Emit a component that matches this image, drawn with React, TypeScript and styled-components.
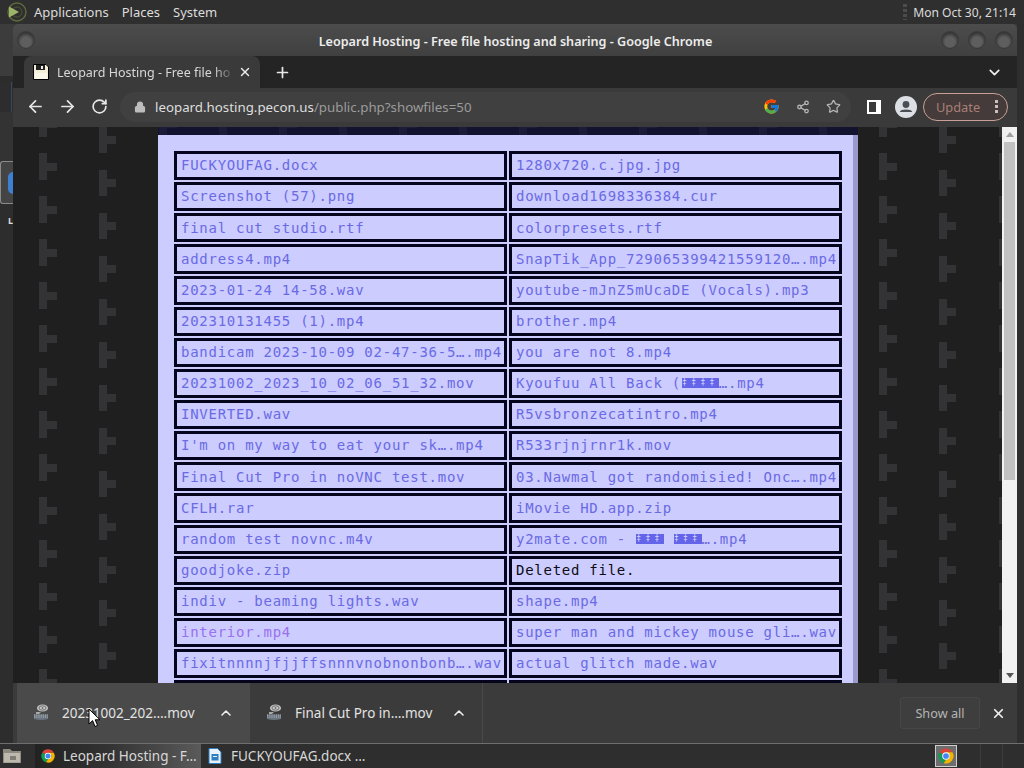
import React from 'react';
import styled, { createGlobalStyle } from 'styled-components';
import { FcGoogle } from 'react-icons/fc';
import { ArrowLeft, ArrowRight, RotateCw, Lock, Share2, Star, ChevronUp, ChevronDown, X, Plus } from 'lucide-react';

const GlobalStyle = createGlobalStyle`
  html, body {
    margin: 0;
    padding: 0;
    background: #2e2e2e;
  }
  * {
    box-sizing: border-box;
  }
`;

const Screen = styled.div`
  position: relative;
  width: 1024px;
  height: 768px;
  overflow: hidden;
  display: flex;
  flex-direction: column;
  font-family: "Noto Sans", "Open Sans", sans-serif;
  color: #e6e6e6;
`;

const TopPanel = styled.div`
  height: 24px;
  flex: none;
  display: flex;
  align-items: center;
  background: #2f2f2f;
  padding: 0 3px 0 6px;
  font-size: 13px;
`;

const PanelMenu = styled.span<{ $ml: number }>`
  margin-left: ${(p) => p.$ml}px;
  color: #dcdcdc;
`;

const PanelGrip = styled.span`
  margin-left: auto;
  width: 4px;
  height: 16px;
  margin-right: 6px;
  background: repeating-linear-gradient(#4c4c4c 0 3px, transparent 3px 5px);
`;

const PanelClock = styled.span`
  color: #dcdcdc;
  font-size: 12.1px;
  padding-right: 5px;
`;

const Middle = styled.div`
  flex: 1;
  min-height: 0;
  display: flex;
`;

const LeftSliver = styled.div`
  width: 13px;
  flex: none;
  display: flex;
  flex-direction: column;
`;

const SliverPart = styled.div<{ $h: number; $bg: string }>`
  height: ${(p) => p.$h}px;
  flex: none;
  background: ${(p) => p.$bg};
  overflow: hidden;
`;

const SliverCard = styled.div`
  height: 43px;
  flex: none;
  background: #444;
  border: 1px solid #8a8a8a;
  border-right: none;
  border-radius: 3px 0 0 3px;
  display: flex;
  align-items: center;
  justify-content: flex-end;
`;

const SliverBlue = styled.div`
  width: 5px;
  height: 22px;
  background: #3d7fd0;
  border-radius: 5px 0 0 5px;
`;

const SliverLetter = styled.div`
  height: 14px;
  flex: none;
  background: #2d2d2d;
  color: #ddd;
  font-size: 9px;
  font-weight: 700;
  padding-left: 8px;
`;

const RightSliver = styled.div`
  width: 7px;
  flex: none;
  background: #2e2e2e;
`;

const ChromeWindow = styled.div`
  width: 1004px;
  flex: none;
  display: flex;
  flex-direction: column;
  background: #3a3a3a;
`;

const TitleBar = styled.div`
  height: 32px;
  flex: none;
  display: flex;
  align-items: center;
  padding: 0 4px 0 4px;
  background: linear-gradient(#4c4c4c, #404040);
  border-radius: 5px 5px 0 0;
`;

const TitleText = styled.div`
  flex: 1;
  padding: 2px 0 0 55px;
  text-align: center;
  font-size: 12.6px;
  font-weight: 600;
  color: #ededed;
`;

const WinButton = styled.span<{ $gap?: number }>`
  width: 18px;
  height: 18px;
  flex: none;
  margin-left: ${(p) => p.$gap ?? 0}px;
  border-radius: 50%;
  background: radial-gradient(circle at 50% 62%, #5e5e5e 38%, #363636 72%);
  border: 1px solid #3a3a3a;
`;

const TabStrip = styled.div`
  height: 32px;
  flex: none;
  display: flex;
  align-items: center;
  background: #242425;
  padding-left: 11px;
  color: #e8e8e8;
`;

const Tab = styled.div`
  width: 236px;
  height: 32px;
  flex: none;
  display: flex;
  align-items: center;
  padding: 0 8px 0 9px;
  background: #3a3a3a;
  border-radius: 8px 8px 0 0;
  font-size: 12.5px;
  color: #d8d8d8;
`;

const TabTitle = styled.span`
  width: 178px;
  margin-left: 8px;
  flex: none;
  white-space: nowrap;
  -webkit-mask-image: linear-gradient(90deg, #000 88%, transparent);
  mask-image: linear-gradient(90deg, #000 88%, transparent);
`;

const TabClose = styled.span`
  display: flex;
  margin-left: 3px;
  color: #eee;
`;

const NewTab = styled.span`
  display: flex;
  margin-left: 14px;
`;

const StripChevron = styled.span`
  margin-left: auto;
  margin-right: 14px;
  display: flex;
  color: #eee;
`;

const Toolbar = styled.div`
  height: 39px;
  flex: none;
  display: flex;
  align-items: center;
  background: #3a3a3a;
  padding: 0 9px 2px 12px;
  color: #e6e6e6;
`;

const NavButton = styled.span`
  width: 20px;
  flex: none;
  display: flex;
  justify-content: center;
  margin-right: 12px;
`;

const Omnibox = styled.div`
  width: 731px;
  height: 30px;
  flex: none;
  margin-left: -1px;
  display: flex;
  align-items: center;
  padding: 0 10px 0 14px;
  border-radius: 15px;
  background: #404040;
  font-size: 13.3px;
  color: #9b9b9b;
`;

const UrlHost = styled.span`
  color: #dedede;
`;

const UrlLock = styled.span`
  display: flex;
  margin-right: 9px;
  color: #bdbdbd;
`;

const OmniIcons = styled.span`
  margin-left: auto;
  display: flex;
  align-items: center;
  gap: 16px;
  color: #b5b5b5;
`;

const SidePanelIcon = styled.span`
  width: 14px;
  height: 14px;
  flex: none;
  margin-left: 16px;
  border: 2px solid #fff;
  border-right-width: 5px;
  background: #3a3a3a;
`;

const Avatar = styled.span`
  width: 22px;
  height: 22px;
  flex: none;
  margin-left: 14px;
  display: flex;
`;

const UpdatePill = styled.div`
  width: 85px;
  height: 28px;
  flex: none;
  margin-left: 6px;
  display: flex;
  align-items: center;
  padding: 0 9px 0 12px;
  border: 1px solid #c9a096;
  border-radius: 14px;
  font-size: 12.8px;
  color: #a97f77;
  background: #443b3a;
`;

const PillDots = styled.span`
  margin-left: auto;
  width: 3px;
  height: 13px;
  background: repeating-linear-gradient(#c8c0be 0 3px, transparent 3px 5px);
`;

const Viewport = styled.div`
  flex: 1;
  min-height: 0;
  display: flex;
`;

const PageArea = styled.div`
  position: relative;
  flex: 1;
  min-width: 0;
  overflow: hidden;
  background: #1f1f20;
`;

const Wallpaper = styled.svg`
  position: absolute;
  inset: 0;
  width: 100%;
  height: 100%;
`;

const PanelWrap = styled.div`
  position: relative;
  width: 700px;
  margin-left: 145px;
`;

const PanelCap = styled.div`
  height: 8px;
  background: rgba(10, 10, 60, 0.55);
`;

const FilePanel = styled.div`
  background: #ccccff;
  border-right: 5px solid #9999cc;
  padding: 16px 11px 0 16px;
`;

const FileGrid = styled.div`
  display: grid;
  grid-template-columns: 333px 333px;
  grid-auto-rows: 29.125px;
  column-gap: 2px;
  row-gap: 2px;
`;

const FileCell = styled.div<{ $kind?: 'visited' | 'deleted' }>`
  border: 3px solid #04041c;
  padding: 0 0 0.4px 4px;
  display: flex;
  align-items: center;
  white-space: nowrap;
  overflow: hidden;
  font-family: "DejaVu Sans Mono", "Liberation Mono", monospace;
  font-size: 14px;
  letter-spacing: 0.74px;
  color: ${(p) => (p.$kind === 'visited' ? '#9a70ee' : p.$kind === 'deleted' ? '#0c0c14' : '#6a6ae4')};
`;

const Tofu = styled.span`
  display: inline-block;
  height: 10px;
  margin-left: 1px;
  line-height: 10px;
  background: #6464ea;
  color: #d8d8ff;
  font-size: 8px;
  letter-spacing: 4.37px;
  overflow: hidden;
`;

const Scrollbar = styled.div`
  width: 15px;
  flex: none;
  display: flex;
  flex-direction: column;
  background: #f1f1f1;
`;

const ScrollArrow = styled.div<{ $down?: boolean }>`
  height: 15px;
  flex: none;
  display: flex;
  align-items: center;
  justify-content: center;
  &::before {
    content: '';
    border-left: 4px solid transparent;
    border-right: 4px solid transparent;
    border-top: ${(p) => (p.$down ? '5px solid #555' : 'none')};
    border-bottom: ${(p) => (p.$down ? 'none' : '5px solid #a0a0a0')};
  }
`;

const ScrollThumb = styled.div`
  height: 338px;
  flex: none;
  margin: 0 2px;
  background: #c1c1c1;
`;

const ScrollTrack = styled.div`
  flex: 1;
`;

const Shelf = styled.div`
  height: 60px;
  flex: none;
  display: flex;
  align-items: stretch;
  background: #3b3b3b;
  padding-left: 4px;
`;

const DownloadItem = styled.div<{ $hover?: boolean }>`
  width: 233px;
  flex: none;
  display: flex;
  align-items: center;
  padding: 0 0 1px 16px;
  background: ${(p) => (p.$hover ? '#4a4a4a' : 'transparent')};
  border-right: 1px solid #4a4a4a;
  font-size: 13.5px;
  color: #e2e2e2;
`;

const DownloadName = styled.span`
  width: 139px;
  flex: none;
  margin-left: 13px;
  white-space: nowrap;
`;

const DownloadChevron = styled.span`
  display: flex;
  margin-left: 17px;
  color: #eee;
`;

const ShelfEnd = styled.div`
  margin-left: auto;
  display: flex;
  align-items: center;
  padding-right: 11px;
  color: #eee;
`;

const ShowAll = styled.div`
  width: 80px;
  height: 32px;
  display: flex;
  align-items: center;
  justify-content: center;
  border: 1px solid #464646;
  border-radius: 3px;
  background: #3e3e3e;
  font-size: 12.7px;
  color: #b5b5b5;
  margin-right: 11px;
`;

const Taskbar = styled.div`
  height: 25px;
  flex: none;
  display: flex;
  align-items: center;
  background: #2e2e2e;
  border-top: 1px solid #6f6f6f;
  font-size: 13.5px;
  color: #d8d8d8;
`;

const ShowDesktop = styled.span`
  width: 35px;
  flex: none;
  display: flex;
  padding-left: 2px;
`;

const TaskItem = styled.div<{ $active?: boolean }>`
  height: 24px;
  width: ${(p) => (p.$active ? '166px' : 'auto')};
  flex: none;
  display: flex;
  align-items: center;
  gap: ${(p) => (p.$active ? '7px' : '9px')};
  padding-left: ${(p) => (p.$active ? '5px' : '7px')};
  white-space: nowrap;
  overflow: hidden;
  background: ${(p) => (p.$active ? 'linear-gradient(90deg, #222, #333 45%, #5a5a5a)' : 'transparent')};
`;

const TaskTray = styled.div`
  margin-left: auto;
  display: flex;
  align-items: center;
  height: 24px;
`;

const TrayIcon = styled.span`
  width: 22px;
  height: 22px;
  display: flex;
  align-items: center;
  justify-content: center;
  border: 1px solid #cfcfcf;
  background: #6d6d6d;
  margin-right: 23px;
`;

const TrayCell = styled.span`
  width: 22px;
  height: 24px;
  border-left: 1px solid #3c3c3c;
`;

const Cursor = styled.svg`
  position: absolute;
  left: 88px;
  top: 708px;
  width: 13px;
  height: 20px;
`;

const MateLogo = () => (
  <svg width="22" height="20" viewBox="0 0 22 20">
    <circle cx="11" cy="10" r="9" fill="none" stroke="#5d6b3d" strokeWidth="1.4" />
    <circle cx="11" cy="10" r="5" fill="none" stroke="#4c5632" strokeWidth="1" />
    <path d="M3 4.5 L13 10 L3 15.5 Z" fill="#9bb468" />
  </svg>
);

const Floppy = () => (
  <svg width="16" height="16" viewBox="0 0 16 16">
    <path d="M0.5 0.5 H13 L15.5 3 V15.5 H0.5 Z" fill="#f4efd9" stroke="#000" />
    <rect x="3" y="1" width="9" height="5" fill="#222" />
    <rect x="8" y="2" width="2" height="3" fill="#eee" />
    <rect x="2" y="9" width="12" height="6" fill="#fbf8ea" />
  </svg>
);

const ChromeIcon = ({ size }: { size: number }) => (
  <svg width={size} height={size} viewBox="0 0 24 24">
    <path d="M12 2 A10 10 0 0 1 20.66 7 H12 A5 5 0 0 0 7.67 9.5 L3.34 7 A10 10 0 0 1 12 2 Z" fill="#db4437" />
    <path d="M3.34 7 L7.67 9.5 A5 5 0 0 0 12 17 L9 21.54 A10 10 0 0 1 3.34 7 Z" fill="#0f9d58" />
    <path d="M20.66 7 A10 10 0 0 1 9 21.54 L12 17 A5 5 0 0 0 16.33 9.5 L12 7 Z" fill="#f4b400" />
    <circle cx="12" cy="12" r="5" fill="#fff" />
    <circle cx="12" cy="12" r="3.8" fill="#4285f4" />
  </svg>
);

const ReelIcon = () => (
  <svg width="16" height="17" viewBox="0 0 16 17">
    <ellipse cx="9.5" cy="4" rx="5.5" ry="3.6" fill="#c9c9c9" />
    <ellipse cx="9.5" cy="4" rx="3.6" ry="2.2" fill="none" stroke="#6a6a6a" strokeWidth="1" />
    <circle cx="9.5" cy="4" r="0.9" fill="#6a6a6a" />
    <path d="M3 8 L8 8 L6 10 H3 Z" fill="#a8a8a8" />
    <path d="M1 10.5 H15 V15 Q8 16.8 1 15 Z" fill="#6a747e" />
    <path d="M1 11 H15 M1 13 H15" stroke="#c6ccd2" strokeWidth="0.8" strokeDasharray="1.2 1" />
  </svg>
);

const AvatarIcon = () => (
  <svg width="22" height="22" viewBox="0 0 22 22">
    <circle cx="11" cy="11" r="11" fill="#dcdfe3" />
    <circle cx="11" cy="8.5" r="3.4" fill="#4b4f55" />
    <path d="M4.8 16 C5.6 12.8 16.4 12.8 17.2 16 Z" fill="#4b4f55" />
  </svg>
);

const FolderIcon = () => (
  <svg width="20" height="18" viewBox="0 0 20 18">
    <path d="M1 2 H8 L10 4 H19 V16 H1 Z" fill="#8d8a80" />
    <rect x="2" y="6" width="16" height="9.5" fill="#bdb9ad" />
    <rect x="8" y="9" width="6" height="4" fill="#807e74" />
  </svg>
);

const DocIcon = () => (
  <svg width="14" height="16" viewBox="0 0 14 16">
    <path d="M1 0.5 H9.5 L13 4 V15.5 H1 Z" fill="#e8f1fa" stroke="#2d7dc0" />
    <rect x="3.5" y="6" width="7" height="6.5" fill="#2d7dc0" />
    <rect x="5" y="8" width="4" height="1" fill="#e8f1fa" />
  </svg>
);

type FileEntry = { name: React.ReactNode; kind?: 'visited' | 'deleted' };

const leftFiles: FileEntry[] = [
  { name: 'FUCKYOUFAG.docx' },
  { name: 'Screenshot (57).png' },
  { name: 'final cut studio.rtf' },
  { name: 'address4.mp4' },
  { name: '2023-01-24 14-58.wav' },
  { name: '202310131455 (1).mp4' },
  { name: 'bandicam 2023-10-09 02-47-36-5….mp4' },
  { name: '20231002_2023_10_02_06_51_32.mov' },
  { name: 'INVERTED.wav' },
  { name: "I'm on my way to eat your sk….mp4" },
  { name: 'Final Cut Pro in noVNC test.mov' },
  { name: 'CFLH.rar' },
  { name: 'random test novnc.m4v' },
  { name: 'goodjoke.zip' },
  { name: 'indiv - beaming lights.wav' },
  { name: 'interior.mp4', kind: 'visited' },
  { name: 'fixitnnnnjfjjffsnnnvnobnonbonb….wav' },
  { name: '' },
];

const rightFiles: FileEntry[] = [
  { name: '1280x720.c.jpg.jpg' },
  { name: 'download1698336384.cur' },
  { name: 'colorpresets.rtf' },
  { name: 'SnapTik_App_729065399421559120….mp4' },
  { name: 'youtube-mJnZ5mUcaDE (Vocals).mp3' },
  { name: 'brother.mp4' },
  { name: 'you are not 8.mp4' },
  { name: <>Kyoufuu All Back (<Tofu>‡‡‡‡</Tofu>….mp4</> },
  { name: 'R5vsbronzecatintro.mp4' },
  { name: 'R533rjnjrnr1k.mov' },
  { name: '03.Nawmal got randomisied! Onc….mp4' },
  { name: 'iMovie HD.app.zip' },
  { name: <>y2mate.com - <Tofu>‡‡‡</Tofu> <Tofu>‡‡‡</Tofu>….mp4</> },
  { name: 'Deleted file.', kind: 'deleted' },
  { name: 'shape.mp4' },
  { name: 'super man and mickey mouse gli….wav' },
  { name: 'actual glitch made.wav' },
  { name: '' },
];

const App = () => {
  return (
    <Screen>
      <GlobalStyle />
      <TopPanel>
        <MateLogo />
        <PanelMenu $ml={6}>Applications</PanelMenu>
        <PanelMenu $ml={13}>Places</PanelMenu>
        <PanelMenu $ml={13}>System</PanelMenu>
        <PanelGrip />
        <PanelClock>Mon Oct 30, 21:14</PanelClock>
      </TopPanel>
      <Middle>
        <LeftSliver>
          <SliverPart $h={52} $bg="#3c3c3c" />
          <SliverPart $h={6} $bg="#2c2c2c" />
          <SliverPart $h={30} $bg="linear-gradient(90deg, #2d2d2d 82%, #3b6ea8 84%, #2d2d2d 92%)" />
          <SliverPart $h={49} $bg="#333" />
          <SliverCard>
            <SliverBlue />
          </SliverCard>
          <SliverPart $h={10} $bg="#2d2d2d" />
          <SliverLetter>L</SliverLetter>
          <SliverPart $h={515} $bg="#2d2d2d" />
        </LeftSliver>
        <ChromeWindow>
          <TitleBar>
            <WinButton />
            <TitleText>Leopard Hosting - Free file hosting and sharing - Google Chrome</TitleText>
            <WinButton />
            <WinButton $gap={9} />
            <WinButton $gap={9} />
          </TitleBar>
          <TabStrip>
            <Tab>
              <Floppy />
              <TabTitle>Leopard Hosting - Free file ho</TabTitle>
              <TabClose>
                <X size={14} strokeWidth={2.4} />
              </TabClose>
            </Tab>
            <NewTab>
              <Plus size={17} strokeWidth={2.4} />
            </NewTab>
            <StripChevron>
              <ChevronDown size={17} strokeWidth={2.4} />
            </StripChevron>
          </TabStrip>
          <Toolbar>
            <NavButton>
              <ArrowLeft size={19} strokeWidth={2.2} />
            </NavButton>
            <NavButton>
              <ArrowRight size={19} strokeWidth={2.2} />
            </NavButton>
            <NavButton>
              <RotateCw size={17} strokeWidth={2.4} />
            </NavButton>
            <Omnibox>
              <UrlLock>
                <Lock size={12} strokeWidth={2.4} fill="#bdbdbd" />
              </UrlLock>
              <span>
                <UrlHost>leopard.hosting.pecon.us</UrlHost>/public.php?showfiles=50
              </span>
              <OmniIcons>
                <FcGoogle size={17} />
                <Share2 size={14} strokeWidth={2.2} />
                <Star size={15} strokeWidth={2} />
              </OmniIcons>
            </Omnibox>
            <SidePanelIcon />
            <Avatar>
              <AvatarIcon />
            </Avatar>
            <UpdatePill>
              Update
              <PillDots />
            </UpdatePill>
          </Toolbar>
          <Viewport>
            <PageArea>
              <Wallpaper>
                <defs>
                  <pattern id="wall" width="120" height="43" patternUnits="userSpaceOnUse">
                    <rect x="26" y="26" width="8" height="17" fill="#333335" />
                    <rect x="26" y="0" width="8" height="10" fill="#333335" />
                    <rect x="34" y="36" width="10" height="7" fill="#333335" />
                    <rect x="34" y="0" width="10" height="1" fill="#333335" />
                    <rect x="86" y="0" width="8" height="26" fill="#333335" />
                    <rect x="94" y="9" width="9" height="8" fill="#333335" />
                  </pattern>
                </defs>
                <rect x="0" y="0" width="100%" height="100%" fill="url(#wall)" />
              </Wallpaper>
              <PanelWrap>
                <PanelCap />
                <FilePanel>
                  <FileGrid>
                    {leftFiles.map((file, i) => (
                      <React.Fragment key={i}>
                        <FileCell $kind={file.kind}>
                          <span>{file.name}</span>
                        </FileCell>
                        <FileCell $kind={rightFiles[i].kind}>
                          <span>{rightFiles[i].name}</span>
                        </FileCell>
                      </React.Fragment>
                    ))}
                  </FileGrid>
                </FilePanel>
              </PanelWrap>
            </PageArea>
            <Scrollbar>
              <ScrollArrow />
              <ScrollThumb />
              <ScrollTrack />
              <ScrollArrow $down />
            </Scrollbar>
          </Viewport>
          <Shelf>
            <DownloadItem $hover>
              <ReelIcon />
              <DownloadName>20231002_202….mov</DownloadName>
              <DownloadChevron>
                <ChevronUp size={16} strokeWidth={2.4} />
              </DownloadChevron>
            </DownloadItem>
            <DownloadItem>
              <ReelIcon />
              <DownloadName>Final Cut Pro in….mov</DownloadName>
              <DownloadChevron>
                <ChevronUp size={16} strokeWidth={2.4} />
              </DownloadChevron>
            </DownloadItem>
            <ShelfEnd>
              <ShowAll>Show all</ShowAll>
              <X size={15} strokeWidth={2.8} />
            </ShelfEnd>
          </Shelf>
        </ChromeWindow>
        <RightSliver />
      </Middle>
      <Taskbar>
        <ShowDesktop>
          <FolderIcon />
        </ShowDesktop>
        <TaskItem $active>
          <ChromeIcon size={16} />
          Leopard Hosting - F…
        </TaskItem>
        <TaskItem>
          <DocIcon />
          FUCKYOUFAG.docx …
        </TaskItem>
        <TaskTray>
          <TrayIcon>
            <ChromeIcon size={18} />
          </TrayIcon>
          <TrayCell />
          <TrayCell />
        </TaskTray>
      </Taskbar>
      <Cursor viewBox="0 0 13 20">
        <path d="M1 1 V16 L4.6 12.6 L7 18.5 L9.6 17.4 L7.2 11.8 H12 Z" fill="#fff" stroke="#000" strokeWidth="1" />
      </Cursor>
    </Screen>
  );
};

export default App;
